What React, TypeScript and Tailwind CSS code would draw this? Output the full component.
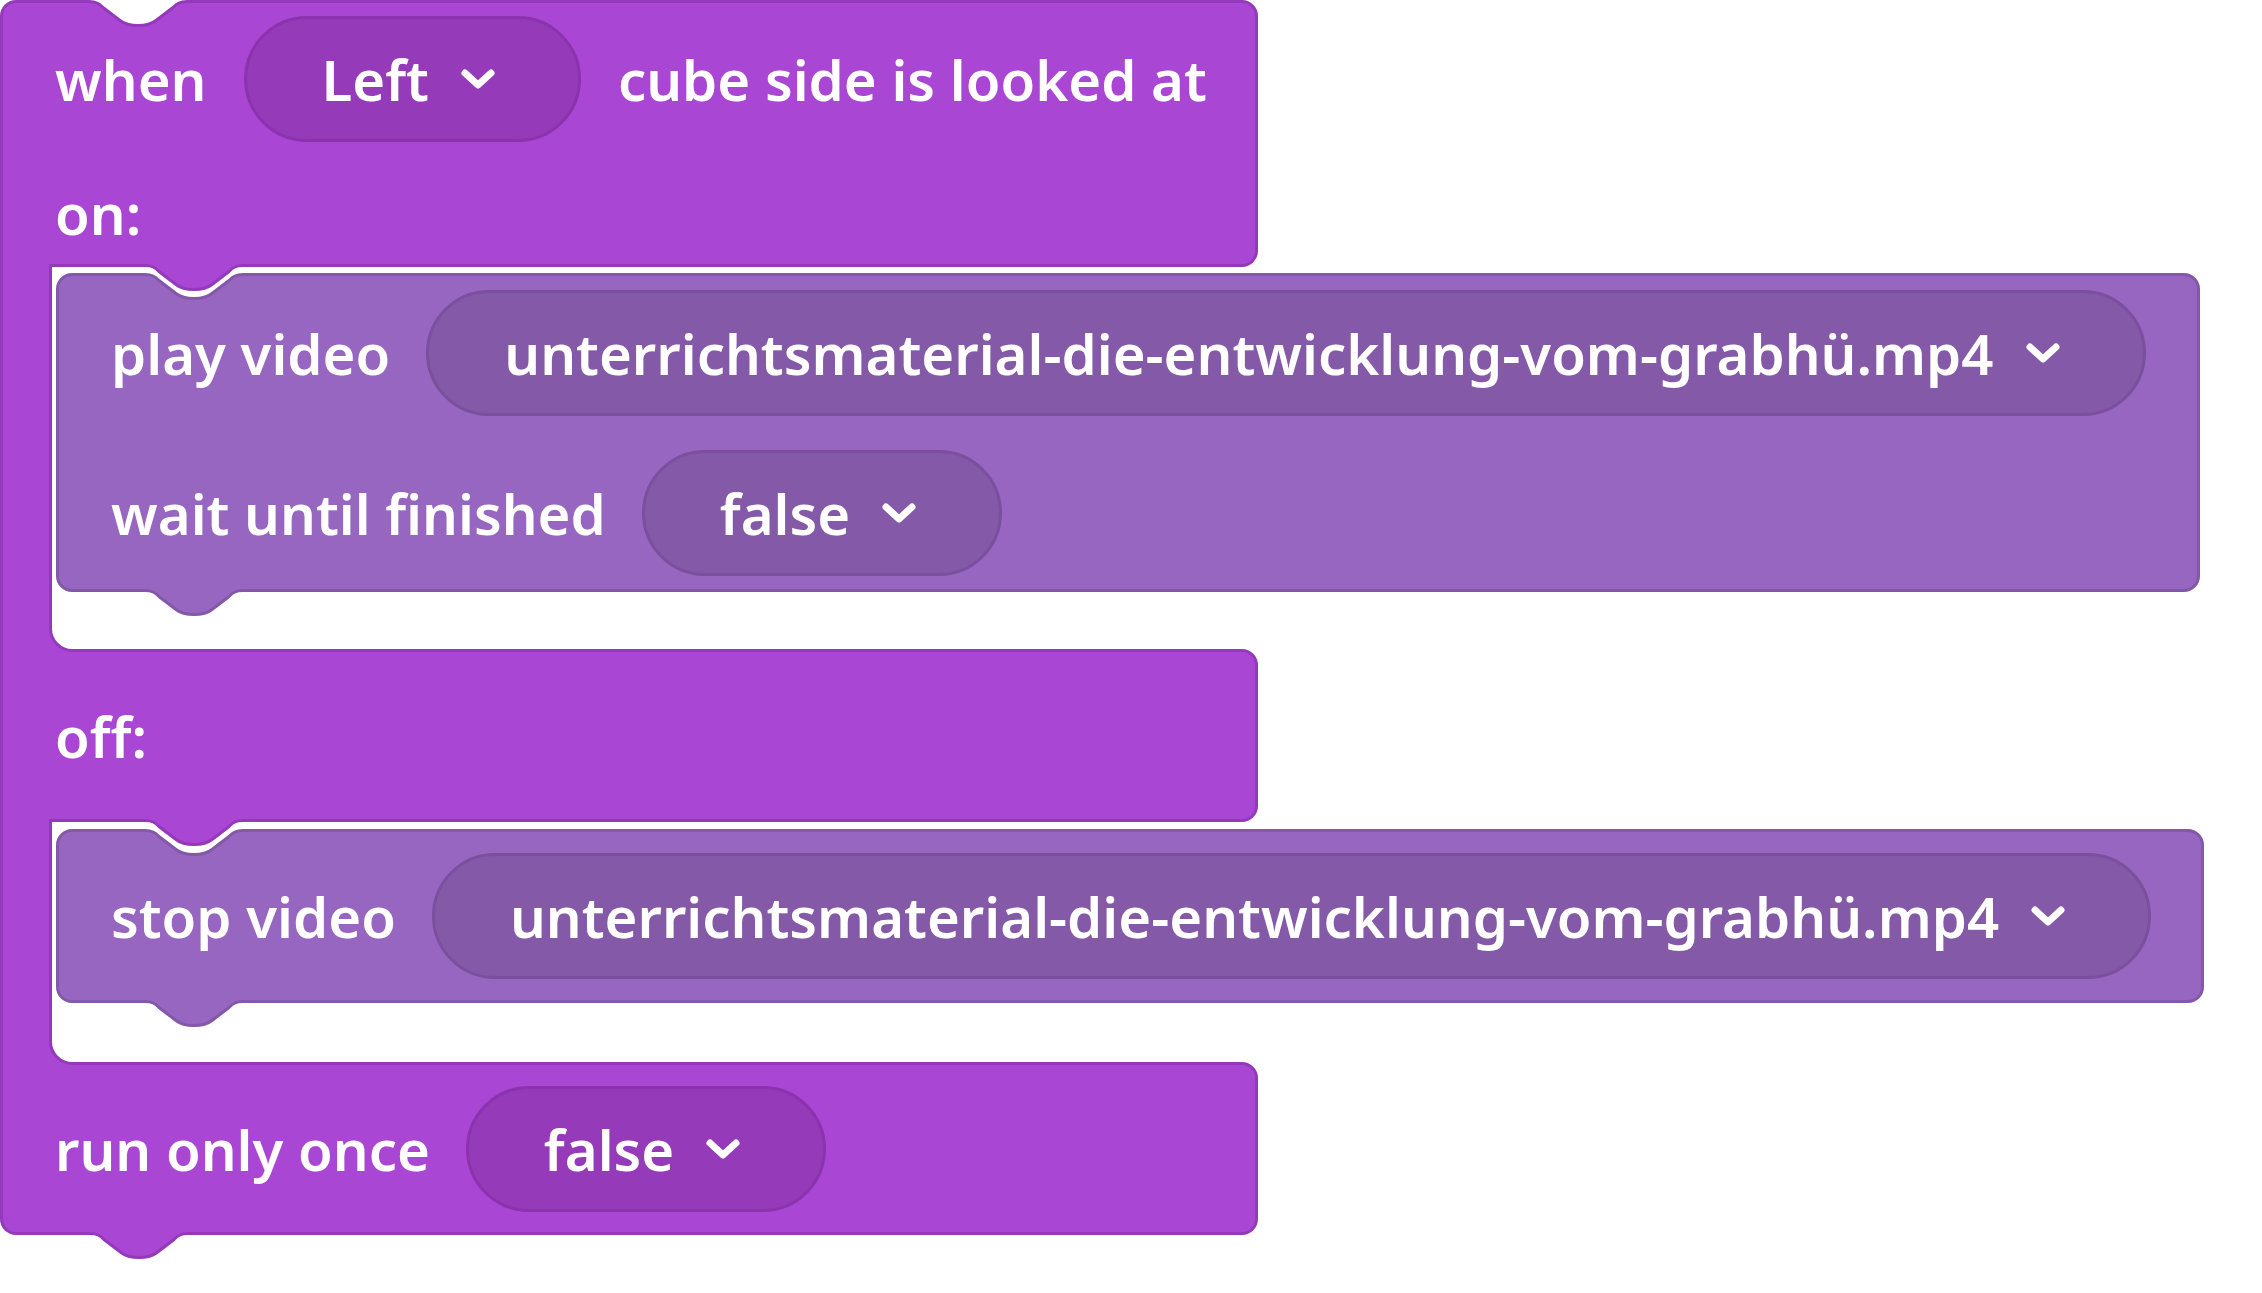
import React from 'react';

// Blockly-like "cube side" event block
const NOTCH = 'C7 0 10 2 14 6 L31 19 C36 23 42 24 49 24 C56 24 62 23 67 19 L84 6 C88 2 91 0 98 0';

const OUTER_FILL = '#a946d4';
const OUTER_LINE = '#9539bb';
const INNER_FILL = '#9666c0';
const INNER_LINE = '#8458a8';

const outerPill = 'bg-[#953ab8] border-[#8a33ad]';
const innerPill = 'bg-[#8459a8] border-[#7a4f9e]';

function Chevron() {
  return (
    <svg width="36" height="22" viewBox="0 0 36 22" className="shrink-0">
      <path d="M5 5 L18 17 L31 5" fill="none" stroke="#ffffff" strokeWidth="7" strokeLinecap="round" strokeLinejoin="round" />
    </svg>
  );
}

function Pill({ label, tone }: { label: string; tone: string }) {
  return (
    <div className={`flex h-[126px] shrink-0 items-center gap-[31px] rounded-full border-[3px] pl-[75px] pr-[82px] ${tone}`}>
      <span className="whitespace-nowrap">{label}</span>
      <Chevron />
    </div>
  );
}

// dip on top edge of a block (previous connection)
function NotchDip({ line, className }: { line: string; className: string }) {
  return (
    <svg className={`absolute -top-[3px] ${className}`} width="104" height="30" viewBox="-3 -1.5 104 30" overflow="visible">
      <path d={`M0 -3 L0 0 ${NOTCH} L98 -3 Z`} fill="#ffffff" />
      <path d={`M-3 0 L0 0 ${NOTCH} L101 0`} fill="none" stroke={line} strokeWidth="3" />
    </svg>
  );
}

// tab hanging below a block edge (next connection)
function Tab({ fill, line, className }: { fill: string; line: string; className: string }) {
  return (
    <svg className={`absolute top-full ${className}`} width="104" height="30" viewBox="-3 -1.5 104 30" overflow="visible">
      <path d={`M0 -1.5 L0 0 ${NOTCH} L98 -1.5 Z`} fill={fill} />
      <path d={`M-3 0 L0 0 ${NOTCH} L101 0`} fill="none" stroke={line} strokeWidth="3" />
    </svg>
  );
}

// rounded inner corner where a statement input meets the next bar
function InnerCorner() {
  return (
    <svg className="absolute -top-[27px] left-0" width="30" height="30" viewBox="0 0 30 30" overflow="visible">
      <path d="M-1 3.5 L1.5 3.5 A22 22 0 0 0 23.5 25.5 L23.5 27 L-1 27 Z" fill={OUTER_FILL} />
      <path d="M1.5 0 L1.5 3.5 A22 22 0 0 0 23.5 25.5 L26 25.5" fill="none" stroke={OUTER_LINE} strokeWidth="3" />
    </svg>
  );
}

export default function App() {
  return (
    <div className="min-h-screen bg-white">
      <div className="flex w-[1258px] font-['Noto_Sans',sans-serif] text-[56.3px] font-semibold leading-[76px] text-white">
        {/* left spine of the C block */}
        <div className="w-[49px] shrink-0 rounded-tl-[16px] rounded-bl-[16px] border-y-[3px] border-l-[3px] border-[#9539bb] bg-[#a946d4]" />

        <div className="flex min-w-0 flex-1 flex-col">
          {/* header */}
          <div className="relative z-10 h-[267px] rounded-tr-[16px] rounded-br-[16px] border-y-[3px] border-r-[3px] border-[#9539bb] bg-[#a946d4] pl-[6px] pt-[13px]">
            <div className="flex h-[126px] items-center gap-[37px] whitespace-nowrap">
              <span>when</span>
              <Pill label="Left" tone={outerPill} />
              <span>cube side is looked at</span>
            </div>
            <div className="mt-[33px] flex h-[76px] items-center">on:</div>
            <NotchDip line={OUTER_LINE} className="left-[37px]" />
            <Tab fill={OUTER_FILL} line={OUTER_LINE} className="left-[93px]" />
          </div>

          {/* on: statements */}
          <div className="relative h-[382px] border-l-[3px] border-[#9539bb] bg-white pl-[4px] pt-[6px]">
            <div className="relative flex h-[319px] w-[2144px] flex-col gap-[34px] rounded-[16px] border-[3px] border-[#8458a8] bg-[#9666c0] pl-[52px] pt-[14px]">
              <div className="flex items-center gap-[36px] whitespace-nowrap">
                <span>play video</span>
                <Pill label="unterrichtsmaterial-die-entwicklung-vom-grabhü.mp4" tone={innerPill} />
              </div>
              <div className="flex items-center gap-[36px] whitespace-nowrap">
                <span>wait until finished</span>
                <Pill label="false" tone={innerPill} />
              </div>
              <NotchDip line={INNER_LINE} className="left-[83px]" />
              <Tab fill={INNER_FILL} line={INNER_LINE} className="left-[83px]" />
            </div>
          </div>

          {/* off: bar */}
          <div className="relative z-10 h-[173px] rounded-tr-[16px] rounded-br-[16px] border-y-[3px] border-r-[3px] border-[#9539bb] bg-[#a946d4] pl-[6px] pt-[46px]">
            <div className="flex h-[76px] items-center">off:</div>
            <InnerCorner />
            <Tab fill={OUTER_FILL} line={OUTER_LINE} className="left-[93px]" />
          </div>

          {/* off: statements */}
          <div className="relative h-[240px] border-l-[3px] border-[#9539bb] bg-white pl-[4px] pt-[7px]">
            <div className="relative flex h-[174px] w-[2148px] items-center gap-[36px] whitespace-nowrap rounded-[16px] border-[3px] border-[#8458a8] bg-[#9666c0] pl-[52px]">
              <span>stop video</span>
              <Pill label="unterrichtsmaterial-die-entwicklung-vom-grabhü.mp4" tone={innerPill} />
              <NotchDip line={INNER_LINE} className="left-[83px]" />
              <Tab fill={INNER_FILL} line={INNER_LINE} className="left-[83px]" />
            </div>
          </div>

          {/* run only once bar */}
          <div className="relative z-10 flex h-[173px] items-center gap-[36px] whitespace-nowrap rounded-tr-[16px] rounded-br-[16px] border-y-[3px] border-r-[3px] border-[#9539bb] bg-[#a946d4] pl-[6px]">
            <span>run only once</span>
            <Pill label="false" tone={outerPill} />
            <InnerCorner />
            <Tab fill={OUTER_FILL} line={OUTER_LINE} className="left-[38px]" />
          </div>
        </div>
      </div>
    </div>
  );
}
